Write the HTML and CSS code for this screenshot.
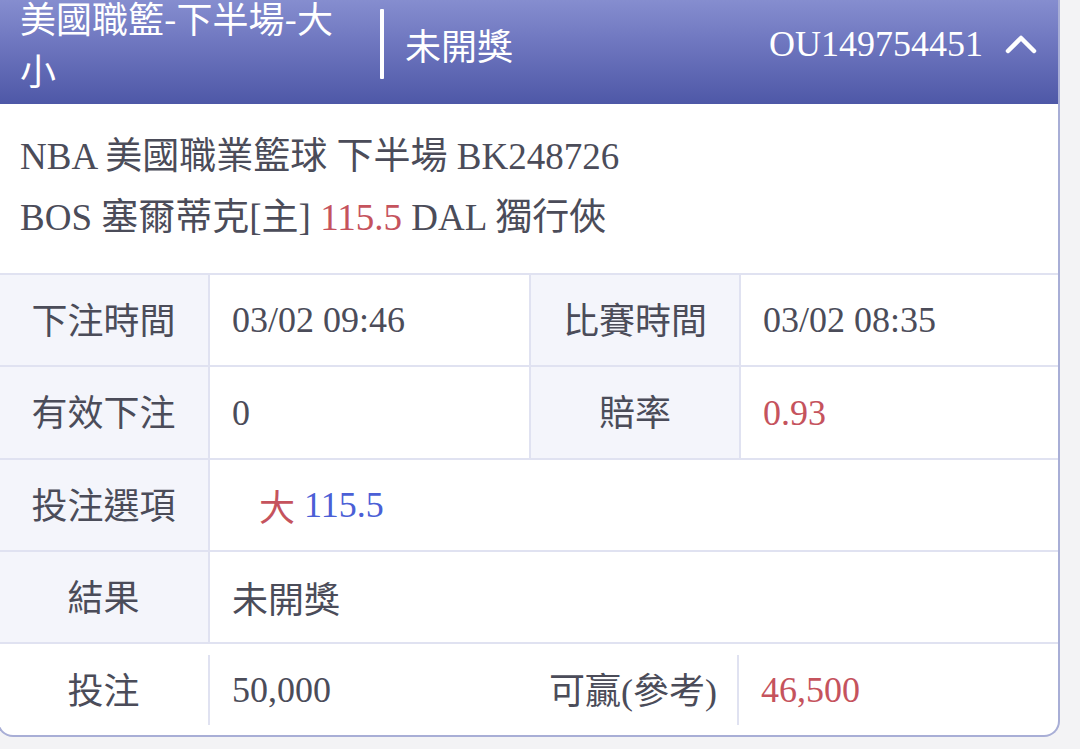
FILE: index.html
```html
<!DOCTYPE html>
<html lang="zh-Hant">
<head>
<meta charset="utf-8">
<title>注單</title>
<link rel="stylesheet" href="styles.css">
</head>
<body>
<div class="card">
  <div class="head">
    <div class="title">美國職籃-下半場-大小</div>
    <div class="divider"></div>
    <div class="status">未開獎</div>
    <div class="code">OU149754451</div>
    <svg class="chev" width="32" height="20" viewBox="0 0 32 20"><polyline points="3,17 16,4 29,17" fill="none" stroke="#fff" stroke-width="4.5" stroke-linecap="round" stroke-linejoin="round"/></svg>
  </div>
  <div class="info">
    <div class="line">NBA 美國職業籃球 下半場 BK248726</div>
    <div class="line">BOS 塞爾蒂克[主] <span class="red">115.5</span> DAL 獨行俠</div>
  </div>
  <div class="grid">
    <div class="lbl">下注時間</div>
    <div class="val">03/02 09:46</div>
    <div class="lbl">比賽時間</div>
    <div class="val">03/02 08:35</div>

    <div class="lbl">有效下注</div>
    <div class="val">0</div>
    <div class="lbl">賠率</div>
    <div class="val red">0.93</div>

    <div class="lbl">投注選項</div>
    <div class="val wide pick"><span class="red">大</span>&nbsp;<span class="blue">115.5</span></div>

    <div class="lbl">結果</div>
    <div class="val wide">未開獎</div>
  </div>
  <div class="foot">
    <div class="flbl">投注</div>
    <div class="fsep"></div>
    <div class="fval">50,000</div>
    <div class="flbl">可贏(參考)</div>
    <div class="fsep"></div>
    <div class="fval red">46,500</div>
  </div>
</div>
</body>
</html>
```

FILE: styles.css
```css
html, body {
  margin: 0;
  padding: 0;
}
body {
  background: #f3f3f5;
  font-family: "Liberation Serif", "Noto Sans CJK TC", serif;
  color: #4b4c59;
  overflow: hidden;
}
.card {
  width: 1059px;
  margin-left: -3px;
  margin-top: -16px;
  background: #fff;
  border: 2px solid #a8aed6;
  border-top: none;
  border-radius: 0 0 16px 16px;
  overflow: hidden;
}
.head {
  height: 120px;
  display: flex;
  align-items: center;
  padding-left: 21px;
  padding-right: 21px;
  background: linear-gradient(180deg, #8e96d5 0%, #7179c1 45%, #4e58a7 100%);
  color: #fff;
}
.title {
  width: 330px;
  flex: none;
  font-family: "Noto Sans CJK TC", sans-serif;
  font-size: 36px;
  line-height: 52px;
  margin-top: -2px;
}
.divider {
  width: 4px;
  height: 70px;
  background: #fff;
  border-radius: 1px;
  margin-left: 30px;
}
.status {
  font-family: "Noto Sans CJK TC", sans-serif;
  font-size: 36px;
  margin-left: 21px;
}
.code {
  margin-left: auto;
  font-size: 36px;
}
.chev {
  margin-left: 22px;
  margin-right: 0;
}
.info {
  padding: 22px 21px 25px;
}
.line {
  font-size: 37px;
  line-height: 61px;
}
.red { color: #c5535d; }
.blue { color: #4b5fd6; }
.grid {
  display: grid;
  grid-template-columns: 209px 319px 208px 1fr;
  grid-template-rows: 90px 91px 90px 90px;
  gap: 2px;
  background: #e0e2f1;
  border-top: 2px solid #e0e2f1;
  border-bottom: 2px solid #e0e2f1;
}
.lbl {
  background: #f4f5fb;
  display: flex;
  align-items: center;
  justify-content: center;
  font-family: "Noto Sans CJK TC", sans-serif;
  font-size: 36px;
  padding-bottom: 5px;
}
.val {
  background: #fff;
  display: flex;
  align-items: center;
  padding-left: 22px;
  font-size: 36px;
}
.wide {
  grid-column: 2 / 5;
}
.pick {
  padding-left: 49px;
}
.foot {
  display: grid;
  grid-template-columns: 209px 2px 319px 208px 2px 1fr;
  height: 91px;
  align-items: center;
  font-size: 36px;
}
.flbl {
  text-align: center;
  margin-top: -4px;
}
.fsep {
  height: 70px;
  background: #e0e2f1;
}
.fval {
  padding-left: 22px;
}
```
